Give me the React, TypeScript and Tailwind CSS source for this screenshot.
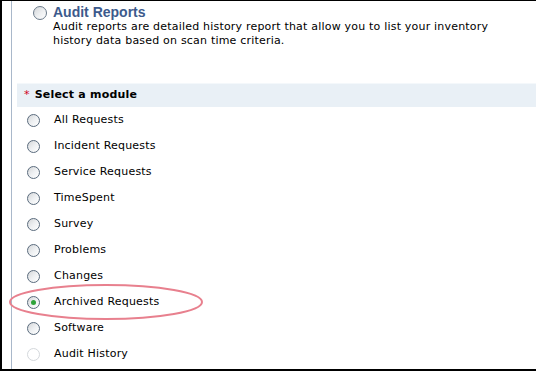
import React from "react";

const modules = [
  "All Requests",
  "Incident Requests",
  "Service Requests",
  "TimeSpent",
  "Survey",
  "Problems",
  "Changes",
  "Archived Requests",
  "Software",
  "Audit History",
];

function Radio({ checked, disabled }: { checked?: boolean; disabled?: boolean }) {
  return (
    <span
      className={
        disabled
          ? "flex h-[13px] w-[13px] shrink-0 items-center justify-center rounded-full border border-[#d4d8dc] bg-white"
          : "flex h-[13px] w-[13px] shrink-0 items-center justify-center rounded-full border border-[#5a6b7d] bg-gradient-to-br from-[#d4d6d8] via-[#eef0f2] to-white"
      }
    >
      {checked && <span className="h-[5px] w-[5px] rounded-full bg-[#2fa33a]" />}
    </span>
  );
}

export default function App() {
  return (
    <div className="h-[371px] w-[536px] overflow-hidden bg-white font-['DejaVu_Sans',Verdana,sans-serif] text-[11px] tracking-[0.2px] text-black">
      <div className="flex h-full border-t border-b-2 border-l-2 border-black">
        {/* left gutter with thin rule */}
        <div className="w-[9px] shrink-0" />
        <div className="w-px shrink-0 bg-[#a9b8ca]" />

        <div className="flex flex-1 flex-col pl-[5px]">
          {/* audit reports option */}
          <div className="flex gap-[6px] pl-[16px] pt-[4px]">
            <div className="pt-[1px]">
              <span className="flex h-[14px] w-[14px] items-center justify-center rounded-full border border-[#6b7a8a] bg-gradient-to-br from-[#d2d5d8] via-[#eceef0] to-white" />
            </div>
            <div>
              <div className="font-['Liberation_Sans',Arial,sans-serif] text-[14px] font-bold leading-[15px] tracking-normal text-[#3c5a8c]">
                Audit Reports
              </div>
              <p className="leading-[14px]">
                Audit reports are detailed history report that allow you to list your inventory
                <br />
                history data based on scan time criteria.
              </p>
            </div>
          </div>

          {/* module picker header */}
          <div className="mt-[35px] flex h-[24px] items-center border-t border-[#f4f8fb] bg-[#e9f0f6] pl-[7px]">
            <span className="mr-[5px] text-[#d0021b]">*</span>
            <span className="font-bold">Select a module</span>
          </div>

          {/* module list */}
          <div className="relative">
            {modules.map((m, i) => (
              <div key={m} className="flex h-[26px] items-center pl-[10px]">
                <Radio checked={m === "Archived Requests"} disabled={i === modules.length - 1} />
                <span className="ml-[14px]">{m}</span>
              </div>
            ))}
            <svg
              className="absolute left-[-9px] top-[177px]"
              width="198"
              height="36"
              viewBox="0 0 198 36"
            >
              <ellipse cx="98" cy="18" rx="96" ry="17" fill="none" stroke="#e8808e" strokeWidth="2" />
            </svg>
          </div>
        </div>
      </div>
    </div>
  );
}
